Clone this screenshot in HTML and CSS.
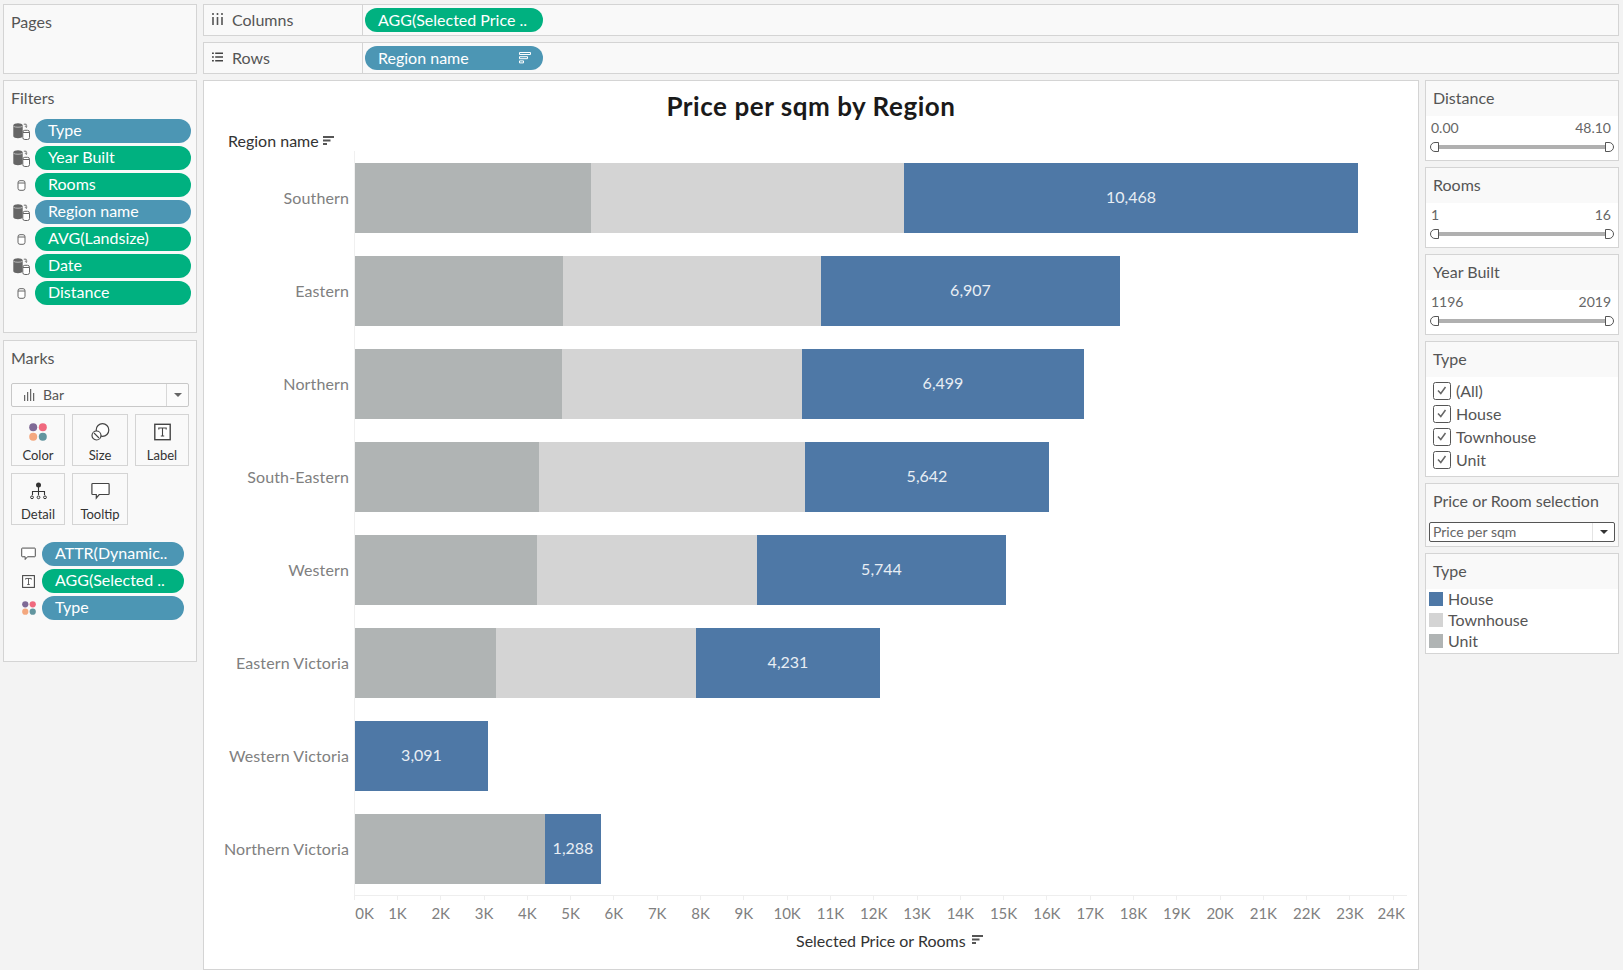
FILE: index.html
```
<!DOCTYPE html>
<html lang="en">
<head>
<meta charset="utf-8">
<title>Price per sqm by Region</title>
<link rel="stylesheet" href="styles.css">
</head>
<body>
<svg class="defs" width="0" height="0" aria-hidden="true">
  <symbol id="db2" viewBox="0 0 17 17">
    <path d="M.3 2.300C.3 1 2.800.3 5 .3s4.700.7 4.700 2v11c0 1.300-2.500 2-4.700 2s-4.700-.7-4.700-2z" fill="#666"/>
    <path d="M.6 3.400c1.500 1.100 7.300 1.100 8.800 0" fill="none" stroke="#ddd" stroke-width=".7"/>
    <path d="M10.800 1.200h2.400v3M12.100 3.300l1.100 1.100 1.100-1.100" fill="none" stroke="#666" stroke-width=".9"/>
    <rect x="9.800" y="7.300" width="6.700" height="9.200" rx="2" fill="#fff" stroke="#666"/>
    <path d="M9.800 9.500h6.700" stroke="#666"/>
  </symbol>
  <symbol id="db1" viewBox="0 0 9 11">
    <rect x="1" y=".7" width="7" height="9.600" rx="2" fill="#fff" stroke="#666"/>
    <path d="M1 3h7" stroke="#666"/>
  </symbol>
  <symbol id="sort" viewBox="0 0 11 10">
    <path d="M0 1h11M0 4.500h7.500M0 8h4" stroke="#555" stroke-width="1.800" fill="none"/>
  </symbol>
  <symbol id="dots" viewBox="0 0 18 18">
    <circle cx="4.200" cy="4.200" r="4" fill="#7f6a96"/>
    <circle cx="13.800" cy="4.200" r="4" fill="#f0697e"/>
    <circle cx="4.200" cy="13.800" r="4" fill="#f4a87f"/>
    <circle cx="13.800" cy="13.800" r="4" fill="#62959f"/>
  </symbol>
  <symbol id="tbox" viewBox="0 0 17 17">
    <rect x=".8" y=".8" width="15.400" height="15.400" fill="#fff" stroke="#444" stroke-width="1.400"/>
    <path d="M4.800 6V4.500h7.400V6M8.500 4.500v8M6.800 12.500h3.400" fill="none" stroke="#444" stroke-width="1.100"/>
  </symbol>
  <symbol id="bubble" viewBox="0 0 19 17">
    <path d="M1.700 1h15.600a.8.8 0 0 1 .8.800v9.400a.8.8 0 0 1-.8.800H8.200L5.300 15.500V12H1.700a.8.8 0 0 1-.8-.8V1.800a.8.8 0 0 1 .8-.8z" fill="#fff" stroke="#444" stroke-width="1.200"/>
  </symbol>
</svg>

<div class="page">
  <section class="panel pages"><h2 class="panel-title">Pages</h2></section>

  <div class="shelves">
    <div class="shelf">
      <div class="shelf-name">
        <svg class="shelf-icon" viewBox="0 0 11 12"><path d="M1 0v2M1 4v8M5.500 0v2M5.500 4v8M10 0v2M10 4v8" stroke="#555" stroke-width="1.600"/></svg>
        <span>Columns</span>
      </div>
      <div class="pill green shelf-pill">AGG(Selected Price ..</div>
    </div>
    <div class="shelf">
      <div class="shelf-name">
        <svg class="shelf-icon" viewBox="0 0 12 11"><path d="M0 1.500h2M3.500 1.500H12M0 5.500h2M3.500 5.500H12M0 9.500h2M3.500 9.500H12" stroke="#444" stroke-width="1.700"/></svg>
        <span>Rows</span>
      </div>
      <div class="pill blue shelf-pill">
        <span>Region name</span>
        <svg class="pill-sort" viewBox="0 0 12 12"><path d="M.5.500h11v2H.5zM.5 4.700h8v2h-8zM.5 8.900h4v2h-4z" fill="none" stroke="#fff" stroke-width="1"/></svg>
      </div>
    </div>
  </div>

  <div class="left-col">
    <section class="panel filters">
      <h2 class="panel-title">Filters</h2>
      <div class="filter-list">
        <div class="filter-row"><svg class="ic-db2"><use href="#db2"/></svg><div class="pill blue">Type</div></div>
        <div class="filter-row"><svg class="ic-db2"><use href="#db2"/></svg><div class="pill green">Year Built</div></div>
        <div class="filter-row"><svg class="ic-db1"><use href="#db1"/></svg><div class="pill green">Rooms</div></div>
        <div class="filter-row"><svg class="ic-db2"><use href="#db2"/></svg><div class="pill blue">Region name</div></div>
        <div class="filter-row"><svg class="ic-db1"><use href="#db1"/></svg><div class="pill green">AVG(Landsize)</div></div>
        <div class="filter-row"><svg class="ic-db2"><use href="#db2"/></svg><div class="pill green">Date</div></div>
        <div class="filter-row"><svg class="ic-db1"><use href="#db1"/></svg><div class="pill green">Distance</div></div>
      </div>
    </section>

    <section class="panel marks">
      <h2 class="panel-title">Marks</h2>
      <div class="mark-type">
        <svg class="bar-icon" viewBox="0 0 11 12"><path d="M.7 6v6M3.700 3v9M6.700 0v12M9.700 4v8" stroke="#444" stroke-width="1"/></svg>
        <span class="mark-type-name">Bar</span>
        <span class="mark-type-arrow"><i class="caret"></i></span>
      </div>
      <div class="mark-cards">
        <div class="mark-card"><svg class="card-icon" width="18" height="18"><use href="#dots"/></svg><span>Color</span></div>
        <div class="mark-card">
          <svg class="card-icon" width="19" height="18" viewBox="0 0 19 18"><circle cx="11.500" cy="7" r="6.300" fill="#fff" stroke="#444" stroke-width="1.200"/><circle cx="5.500" cy="12.500" r="4.500" fill="#fff" stroke="#444" stroke-width="1.200"/><path d="M3 10l5 5" stroke="#444" stroke-width="1.100"/></svg>
          <span>Size</span>
        </div>
        <div class="mark-card"><svg class="card-icon" width="17" height="17"><use href="#tbox"/></svg><span>Label</span></div>
        <div class="mark-card">
          <svg class="card-icon" width="17" height="18" viewBox="0 0 17 18"><circle cx="8.500" cy="3" r="2.500" fill="#333"/><path d="M8.500 5v8M2.500 13v-3.500h12V13" fill="none" stroke="#333" stroke-width="1.100"/><g fill="none" stroke="#333"><circle cx="2" cy="15.300" r="1.400"/><circle cx="8.500" cy="15.300" r="1.400"/><circle cx="15" cy="15.300" r="1.400"/></g></svg>
          <span>Detail</span>
        </div>
        <div class="mark-card"><svg class="card-icon" width="19" height="17"><use href="#bubble"/></svg><span>Tooltip</span></div>
      </div>
      <div class="mark-fields">
        <div class="mark-row"><svg class="mark-ic" width="15" height="14"><use href="#bubble"/></svg><div class="pill blue">ATTR(Dynamic..</div></div>
        <div class="mark-row"><svg class="mark-ic" width="13" height="13"><use href="#tbox"/></svg><div class="pill green">AGG(Selected ..</div></div>
        <div class="mark-row"><svg class="mark-ic" width="14" height="14"><use href="#dots"/></svg><div class="pill blue">Type</div></div>
      </div>
    </section>
  </div>

  <main class="viz">
    <h1 class="viz-title">Price per sqm by Region</h1>
    <div class="field-head">Region name <svg class="sort-ic"><use href="#sort"/></svg></div>
    <div class="chart">
      <div class="row"><div class="row-label">Southern</div><div class="bars">
        <div class="seg unit" style="width:236px"></div><div class="seg town" style="width:313px"></div><div class="seg house" style="width:454px">10,468</div></div></div>
      <div class="row"><div class="row-label">Eastern</div><div class="bars">
        <div class="seg unit" style="width:208px"></div><div class="seg town" style="width:258px"></div><div class="seg house" style="width:299px">6,907</div></div></div>
      <div class="row"><div class="row-label">Northern</div><div class="bars">
        <div class="seg unit" style="width:207px"></div><div class="seg town" style="width:240px"></div><div class="seg house" style="width:282px">6,499</div></div></div>
      <div class="row"><div class="row-label">South-Eastern</div><div class="bars">
        <div class="seg unit" style="width:184px"></div><div class="seg town" style="width:266px"></div><div class="seg house" style="width:244px">5,642</div></div></div>
      <div class="row"><div class="row-label">Western</div><div class="bars">
        <div class="seg unit" style="width:182px"></div><div class="seg town" style="width:220px"></div><div class="seg house" style="width:249px">5,744</div></div></div>
      <div class="row"><div class="row-label">Eastern Victoria</div><div class="bars">
        <div class="seg unit" style="width:141px"></div><div class="seg town" style="width:200px"></div><div class="seg house" style="width:184px">4,231</div></div></div>
      <div class="row"><div class="row-label">Western Victoria</div><div class="bars">
        <div class="seg house" style="width:133px">3,091</div></div></div>
      <div class="row"><div class="row-label">Northern Victoria</div><div class="bars">
        <div class="seg unit" style="width:190px"></div><div class="seg house" style="width:56px">1,288</div></div></div>
    </div>
    <div class="axis-line"></div>
    <div class="axis">
      <div class="tick"><i></i><span>0K</span></div><div class="tick"><i></i><span>1K</span></div><div class="tick"><i></i><span>2K</span></div><div class="tick"><i></i><span>3K</span></div><div class="tick"><i></i><span>4K</span></div><div class="tick"><i></i><span>5K</span></div><div class="tick"><i></i><span>6K</span></div><div class="tick"><i></i><span>7K</span></div><div class="tick"><i></i><span>8K</span></div><div class="tick"><i></i><span>9K</span></div><div class="tick"><i></i><span>10K</span></div><div class="tick"><i></i><span>11K</span></div><div class="tick"><i></i><span>12K</span></div><div class="tick"><i></i><span>13K</span></div><div class="tick"><i></i><span>14K</span></div><div class="tick"><i></i><span>15K</span></div><div class="tick"><i></i><span>16K</span></div><div class="tick"><i></i><span>17K</span></div><div class="tick"><i></i><span>18K</span></div><div class="tick"><i></i><span>19K</span></div><div class="tick"><i></i><span>20K</span></div><div class="tick"><i></i><span>21K</span></div><div class="tick"><i></i><span>22K</span></div><div class="tick"><i></i><span>23K</span></div><div class="tick"><i></i><span>24K</span></div>
    </div>
    <div class="axis-title">Selected Price or Rooms <svg class="sort-ic"><use href="#sort"/></svg></div>
  </main>

  <aside class="side">
    <section class="card card-slider">
      <h3 class="card-head">Distance</h3>
      <div class="range"><span>0.00</span><span>48.10</span></div>
      <div class="slider"><i class="thumb left"></i><i class="track"></i><i class="thumb right"></i></div>
    </section>
    <section class="card card-slider">
      <h3 class="card-head">Rooms</h3>
      <div class="range"><span>1</span><span>16</span></div>
      <div class="slider"><i class="thumb left"></i><i class="track"></i><i class="thumb right"></i></div>
    </section>
    <section class="card card-slider">
      <h3 class="card-head">Year Built</h3>
      <div class="range"><span>1196</span><span>2019</span></div>
      <div class="slider"><i class="thumb left"></i><i class="track"></i><i class="thumb right"></i></div>
    </section>
    <section class="card card-check">
      <h3 class="card-head">Type</h3>
      <div class="check-list">
        <div class="check-row"><svg class="check" viewBox="0 0 18 18"><rect x=".5" y=".5" width="17" height="17" rx="2" fill="#fff" stroke="#555"/><path d="M5 8.500l2.800 3L12.500 5" fill="none" stroke="#666" stroke-width="1.500"/></svg><span>(All)</span></div>
        <div class="check-row"><svg class="check" viewBox="0 0 18 18"><rect x=".5" y=".5" width="17" height="17" rx="2" fill="#fff" stroke="#555"/><path d="M5 8.500l2.800 3L12.500 5" fill="none" stroke="#666" stroke-width="1.500"/></svg><span>House</span></div>
        <div class="check-row"><svg class="check" viewBox="0 0 18 18"><rect x=".5" y=".5" width="17" height="17" rx="2" fill="#fff" stroke="#555"/><path d="M5 8.500l2.800 3L12.500 5" fill="none" stroke="#666" stroke-width="1.500"/></svg><span>Townhouse</span></div>
        <div class="check-row"><svg class="check" viewBox="0 0 18 18"><rect x=".5" y=".5" width="17" height="17" rx="2" fill="#fff" stroke="#555"/><path d="M5 8.500l2.800 3L12.500 5" fill="none" stroke="#666" stroke-width="1.500"/></svg><span>Unit</span></div>
      </div>
    </section>
    <section class="card card-select">
      <h3 class="card-head">Price or Room selection</h3>
      <div class="select"><span class="select-text">Price per sqm</span><span class="select-arrow"><i class="caret dark"></i></span></div>
    </section>
    <section class="card card-legend">
      <h3 class="card-head">Type</h3>
      <div class="legend">
        <div class="legend-row"><i class="swatch house"></i><span>House</span></div>
        <div class="legend-row"><i class="swatch town"></i><span>Townhouse</span></div>
        <div class="legend-row"><i class="swatch unit"></i><span>Unit</span></div>
      </div>
    </section>
  </aside>
</div>
</body>
</html>
```
FILE: styles.css
```
* { box-sizing: border-box; }
html, body { margin: 0; height: 100%; }
body {
  background: #f3f3f3;
  font-family: "Lato", "Liberation Sans", sans-serif;
  font-size: 16px;
  color: #555;
  overflow: hidden;
}
.defs { position: absolute; }
h1, h2, h3 { margin: 0; font-weight: 400; }

.page {
  display: grid;
  grid-template-columns: 194px 1216px 194px;
  grid-template-rows: 70px 890px;
  grid-template-areas: "pages shelves shelves" "left viz side";
  column-gap: 6px;
  row-gap: 6px;
  padding: 4px 0 0 3px;
}

.panel {
  background: #f9f9f9;
  border: 1px solid #d4d4d4;
}
.panel-title {
  font-size: 16px;
  color: #555;
  padding-left: 7px;
}
.pages { grid-area: pages; }
.pages .panel-title { line-height: 34px; }

.shelves {
  grid-area: shelves;
  display: flex;
  flex-direction: column;
  gap: 6px;
}
.shelf {
  height: 32px;
  display: flex;
  align-items: center;
  background: #f9f9f9;
  border: 1px solid #d4d4d4;
}
.shelf-name {
  width: 159px;
  height: 100%;
  display: flex;
  align-items: center;
  padding-left: 8px;
  border-right: 1px solid #d4d4d4;
}
.shelf-name span { margin: -2px 0 0 9px; }
.shelf-icon { width: 11px; height: 12px; margin-top: -3px; flex: none; }

.pill {
  height: 24px;
  border-radius: 12px;
  padding: 0 13px;
  color: #fff;
  line-height: 21px;
  font-size: 16px;
  white-space: nowrap;
}
.pill.green { background: #00b180; }
.pill.blue { background: #4c96b4; }
.shelf-pill {
  width: 178px;
  margin-left: 2px;
  display: flex;
  align-items: center;
  justify-content: space-between;
  padding-bottom: 2px;
}
.pill-sort { width: 12px; height: 12px; margin: 2px -1px 0 0; }

.left-col {
  grid-area: left;
  display: flex;
  flex-direction: column;
  gap: 7px;
}
.filters { height: 253px; }
.filters .panel-title { line-height: 34px; margin-bottom: 4px; }
.filter-list { display: flex; flex-direction: column; gap: 3px; }
.filter-row { display: flex; align-items: center; }
.filter-row .pill { width: 156px; }
.ic-db2 { width: 17px; height: 17px; margin: 0 5px 0 9px; flex: none; }
.ic-db1 { width: 9px; height: 11px; margin: 0 9px 0 13px; flex: none; }

.marks { height: 322px; padding: 0 7px; }
.marks .panel-title { line-height: 34px; margin-bottom: 8px; padding-left: 0; }
.mark-type {
  height: 24px;
  display: flex;
  align-items: center;
  background: #fbfbfb;
  border: 1px solid #c8c8c8;
  border-radius: 2px;
  font-size: 14px;
}
.bar-icon { width: 11px; height: 12px; margin-left: 12px; }
.mark-type-name { margin: -2px 0 0 8px; flex: 1; }
.mark-type-arrow {
  width: 22px;
  height: 100%;
  border-left: 1px solid #d8d8d8;
  display: flex;
  align-items: center;
  justify-content: center;
}
.caret {
  width: 0;
  height: 0;
  border-left: 4px solid transparent;
  border-right: 4px solid transparent;
  border-top: 4px solid #666;
}
.caret.dark { border-top-color: #333; }

.mark-cards {
  display: grid;
  grid-template-columns: 54px 56px 54px;
  grid-auto-rows: 52px;
  gap: 7px;
  margin-top: 7px;
}
.mark-card {
  display: flex;
  flex-direction: column;
  align-items: center;
  border: 1px solid #d4d4d4;
  font-size: 13px;
  color: #333;
}
.card-icon { margin-top: 8px; height: 18px; }
.mark-card span { margin-top: 7px; line-height: 15px; }

.mark-fields {
  display: flex;
  flex-direction: column;
  gap: 3px;
  margin-top: 17px;
}
.mark-row {
  display: grid;
  grid-template-columns: 31px 142px;
  align-items: center;
}
.mark-ic { justify-self: center; margin-left: 4px; }

.viz {
  grid-area: viz;
  background: #fff;
  border: 1px solid #d4d4d4;
}
.viz-title {
  height: 49px;
  line-height: 50px;
  text-align: center;
  font-size: 26px;
  font-weight: 700;
  letter-spacing: .55px;
  color: #1a1a1a;
}
.field-head {
  height: 21px;
  line-height: 20px;
  padding-left: 24px;
  font-size: 16px;
  color: #333;
  display: flex;
  align-items: center;
  gap: 4px;
}
.sort-ic { width: 11px; height: 10px; }

.chart { display: flex; flex-direction: column; }
.row {
  height: 93px;
  display: flex;
  padding-top: 12px;
}
.row-label {
  width: 150px;
  height: 70px;
  line-height: 69px;
  padding-right: 5px;
  text-align: right;
  color: #808080;
  letter-spacing: .12px;
  white-space: nowrap;
}
.bars {
  flex: 1;
  display: flex;
  align-items: flex-start;
  height: 93px;
  margin-top: -12px;
  padding-top: 12px;
  border-left: 1px solid #f0f0f0;
}
.seg {
  height: 70px;
  line-height: 68px;
  text-align: center;
  color: #e8eef4;
}
.unit { background: #b0b4b4; }
.town { background: #d4d4d4; }
.house { background: #4e78a6; }

.axis-line {
  height: 1px;
  width: 1053px;
  margin-left: 150px;
  background: #eeeeee;
}
.axis {
  display: flex;
  margin-left: 128.5px;
  font-size: 15px;
}
.tick {
  flex: 0 0 43.310px;
  display: flex;
  flex-direction: column;
  align-items: center;
  color: #808080;
}
.tick i { width: 1px; height: 4px; background: #eeeeee; }
.tick span { margin-top: 4px; line-height: 18px; }
.tick:first-child span { margin-left: 21px; }
.tick:last-child span { margin-left: -4px; }

.axis-title {
  height: 20px;
  margin-top: 8px;
  margin-left: 592px;
  display: flex;
  align-items: center;
  gap: 6px;
  color: #333;
  white-space: nowrap;
}

.side {
  grid-area: side;
  display: flex;
  flex-direction: column;
  gap: 6px;
}
.card {
  background: #fff;
  border: 1px solid #d4d4d4;
}
.card-head {
  height: 35px;
  line-height: 34px;
  padding-left: 7px;
  background: #f9f9f9;
  font-size: 16px;
  color: #555;
}
.card-slider { height: 81px; }
.card-check { height: 136px; }
.card-select { height: 64px; background: #f9f9f9; }
.card-legend { height: 101px; }
.range {
  display: flex;
  justify-content: space-between;
  padding: 3px 7px 0 5px;
  line-height: 18px;
  font-size: 14px;
  color: #666;
}
.slider {
  display: flex;
  align-items: center;
  margin: 5px 4px 0 4px;
}
.track { flex: 1; height: 4px; background: #b0b0b0; }
.thumb {
  width: 9px;
  height: 10px;
  background: #fff;
  border: 1px solid #555;
  flex: none;
}
.thumb.left { border-radius: 5px 0 0 5px; }
.thumb.right { border-radius: 0 5px 5px 0; }

.check-list {
  display: flex;
  flex-direction: column;
  gap: 5px;
  padding: 5px 0 0 7px;
}
.check-row { display: flex; align-items: center; gap: 5px; height: 18px; }
.check-row span { margin-top: -2px; }
.check { width: 18px; height: 18px; flex: none; }

.select {
  height: 20px;
  margin: 3px 3px 0;
  display: flex;
  align-items: center;
  background: #fff;
  border: 1px solid #555;
  border-radius: 2px;
  font-size: 14px;
}
.select-text { flex: 1; margin-top: -2px; padding-left: 3px; color: #666; }
.select-arrow {
  width: 22px;
  height: 100%;
  border-left: 1px solid #e4e4e4;
  display: flex;
  align-items: center;
  justify-content: center;
}

.legend {
  display: flex;
  flex-direction: column;
  gap: 7px;
  padding: 3px 0 0 3px;
}
.legend-row { display: flex; align-items: center; gap: 5px; height: 14px; }
.legend-row span { margin-top: -2px; }
.swatch { width: 14px; height: 14px; flex: none; }
```
